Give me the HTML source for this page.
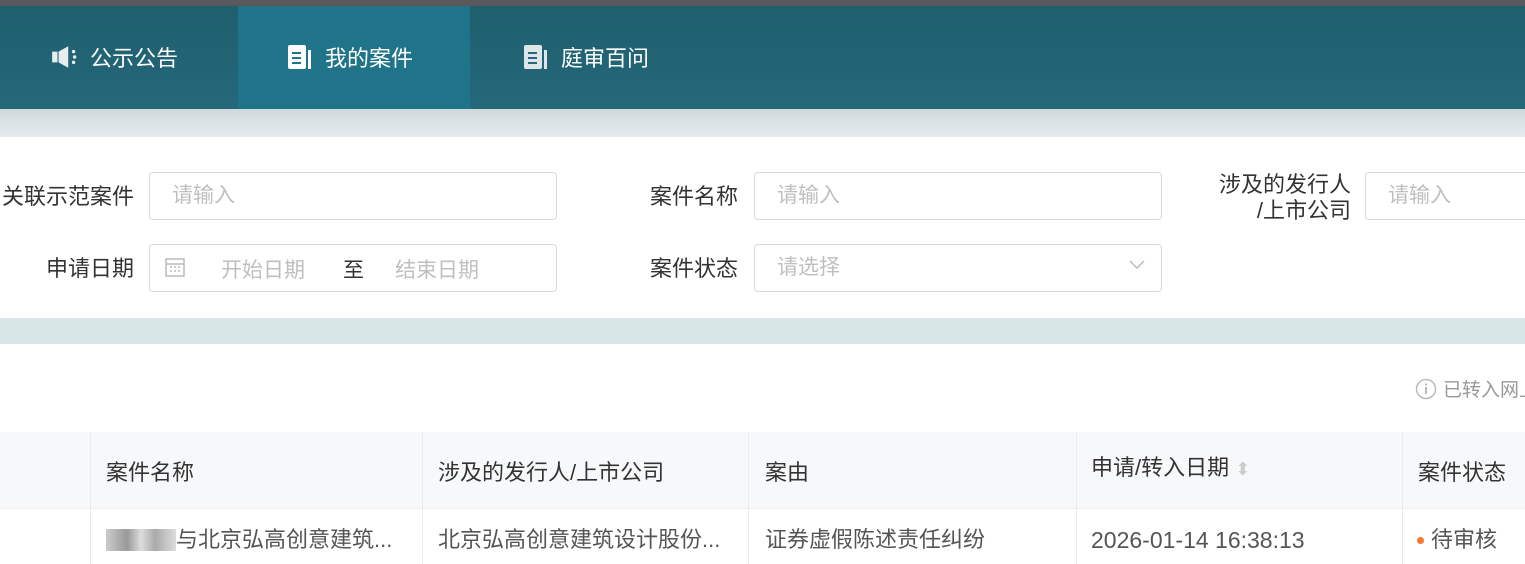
<!DOCTYPE html>
<html><head><meta charset="utf-8"><style>
*{margin:0;padding:0;box-sizing:border-box}
body{width:1525px;height:564px;overflow:hidden;background:#fff;font-family:"Liberation Sans","Noto Sans CJK SC",sans-serif;position:relative;color:#333}
.abs{position:absolute;white-space:nowrap}
.top{left:0;top:0;width:1525px;height:6px;background:#5a5a5e}
.nav{left:0;top:6px;width:1525px;height:103px;background:linear-gradient(#1f5f6e,#24687a);box-shadow:0 3px 5px rgba(0,0,0,.25)}
.act{left:238px;top:6px;width:232px;height:103px;background:#1f7489}
.tab{top:42px;font-size:22px;color:#fff;display:flex;align-items:center;gap:10px;height:30px}
.band1{left:0;top:109px;width:1525px;height:28px;background:linear-gradient(#cfd9dd,#e6ecee)}
.band2{left:0;top:318px;width:1525px;height:26px;background:#d9e6e8}
.lbl{font-size:22px;color:#333;text-align:right;line-height:26px}
.inp{height:48px;border:1px solid #d9d9d9;border-radius:4px;font-size:21px;color:#bfbfbf;padding:0 22px;line-height:46px;background:#fff}
.th{top:432px;height:77px;background:#f7f8fa;border-bottom:1px solid #eee}
.col{font-size:22px;color:#333;line-height:26px}
.vl{width:1px;background:#ebebeb}
</style></head><body>
<div class="abs top"></div>
<div class="abs nav"></div>
<div class="abs act"></div>
<div class="abs tab" style="left:50px"><svg width="30" height="26" viewBox="0 0 28 24"><rect x="2" y="7" width="5" height="10" fill="#e8eef0"/><path d="M8 7 L17 2 V22 L8 17Z" fill="#e8eef0"/><circle cx="22" cy="7" r="1.6" fill="#e8eef0"/><circle cx="23" cy="12" r="1.6" fill="#e8eef0"/><circle cx="22" cy="17" r="1.6" fill="#e8eef0"/></svg>公示公告</div>
<div class="abs tab" style="left:287px"><svg width="28" height="26" viewBox="0 0 28 26"><rect x="1" y="1" width="18" height="24" rx="2" fill="#fff"/><rect x="5" y="8" width="9" height="2" fill="#1f7489"/><rect x="5" y="13" width="9" height="2" fill="#1f7489"/><rect x="5" y="18" width="9" height="2" fill="#1f7489"/><rect x="21" y="6" width="3" height="19" fill="#fff"/></svg>我的案件</div>
<div class="abs tab" style="left:523px"><svg width="28" height="26" viewBox="0 0 28 26"><rect x="1" y="1" width="18" height="24" rx="2" fill="#dfe6ea"/><rect x="5" y="8" width="9" height="2" fill="#24687a"/><rect x="5" y="13" width="9" height="2" fill="#24687a"/><rect x="5" y="18" width="9" height="2" fill="#24687a"/><rect x="21" y="6" width="3" height="19" fill="#dfe6ea"/></svg>庭审百问</div>
<div class="abs band1"></div>

<div class="abs lbl" style="left:-20px;top:184px;width:154px">关联示范案件</div>
<div class="abs inp" style="left:149px;top:172px;width:408px">请输入</div>
<div class="abs lbl" style="left:600px;top:184px;width:138px">案件名称</div>
<div class="abs inp" style="left:754px;top:172px;width:408px">请输入</div>
<div class="abs lbl" style="left:1190px;top:172px;width:161px;line-height:26px">涉及的发行人<br>/上市公司</div>
<div class="abs inp" style="left:1365px;top:172px;width:200px">请输入</div>
<div class="abs lbl" style="left:0;top:256px;width:134px">申请日期</div>
<div class="abs inp" style="left:149px;top:244px;width:408px"></div>
<svg class="abs" style="left:164px;top:256px" width="22" height="22" viewBox="0 0 22 22"><rect x="2" y="3" width="18" height="17" fill="none" stroke="#bbb" stroke-width="1.5"/><line x1="2" y1="8" x2="20" y2="8" stroke="#bbb" stroke-width="1.5"/><path d="M6 11h2M10 11h2M14 11h2M6 15h2M10 15h2M14 15h2" stroke="#bbb" stroke-width="1.5"/></svg>
<div class="abs" style="left:221px;top:254px;font-size:21px;color:#bfbfbf">开始日期</div>
<div class="abs" style="left:343px;top:254px;font-size:21px;color:#333">至</div>
<div class="abs" style="left:395px;top:254px;font-size:21px;color:#bfbfbf">结束日期</div>
<div class="abs lbl" style="left:600px;top:256px;width:138px">案件状态</div>
<div class="abs inp" style="left:754px;top:244px;width:408px">请选择</div>
<svg class="abs" style="left:1129px;top:260px" width="16" height="10"><path d="M1 1 L8 8 L15 1" fill="none" stroke="#bbb" stroke-width="1.5"/></svg>
<div class="abs band2"></div>

<div class="abs" style="left:1415px;top:375px;font-size:19px;color:#999;display:flex;align-items:center;gap:6px"><svg width="22" height="22"><circle cx="11" cy="11" r="9.5" fill="none" stroke="#bbb" stroke-width="1.5"/><rect x="10" y="9" width="2" height="7" fill="#bbb"/><rect x="10" y="5.5" width="2" height="2" fill="#bbb"/></svg>已转入网上</div>

<div class="abs th" style="left:0;width:1525px"></div>
<div class="abs vl" style="left:90px;top:432px;height:132px"></div>
<div class="abs vl" style="left:422px;top:432px;height:132px"></div>
<div class="abs vl" style="left:748px;top:432px;height:132px"></div>
<div class="abs vl" style="left:1076px;top:432px;height:132px"></div>
<div class="abs vl" style="left:1402px;top:432px;height:132px"></div>
<div class="abs col" style="left:106px;top:460px">案件名称</div>
<div class="abs col" style="left:438px;top:460px">涉及的发行人/上市公司</div>
<div class="abs col" style="left:765px;top:460px">案由</div>
<div class="abs col" style="left:1091px;top:455px">申请/转入日期 <span style="font-size:18px;color:#ccc">⬍</span></div>
<div class="abs col" style="left:1418px;top:460px">案件状态</div>
<div class="abs" style="left:106px;top:529px;width:70px;height:22px;background:linear-gradient(90deg,#ccc,#999 30%,#ddd 50%,#aaa 70%,#ddd)"></div>
<div class="abs col" style="left:176px;top:527px;color:#555">与北京弘高创意建筑...</div>
<div class="abs col" style="left:438px;top:527px;color:#555">北京弘高创意建筑设计股份...</div>
<div class="abs col" style="left:765px;top:527px;color:#555">证券虚假陈述责任纠纷</div>
<div class="abs col" style="left:1091px;top:527px;color:#555;font-size:23px">2026-01-14 16:38:13</div>
<div class="abs" style="left:1417px;top:537px;width:7px;height:7px;border-radius:50%;background:#f5782a"></div>
<div class="abs col" style="left:1431px;top:527px;color:#555">待审核</div>
</body></html>
